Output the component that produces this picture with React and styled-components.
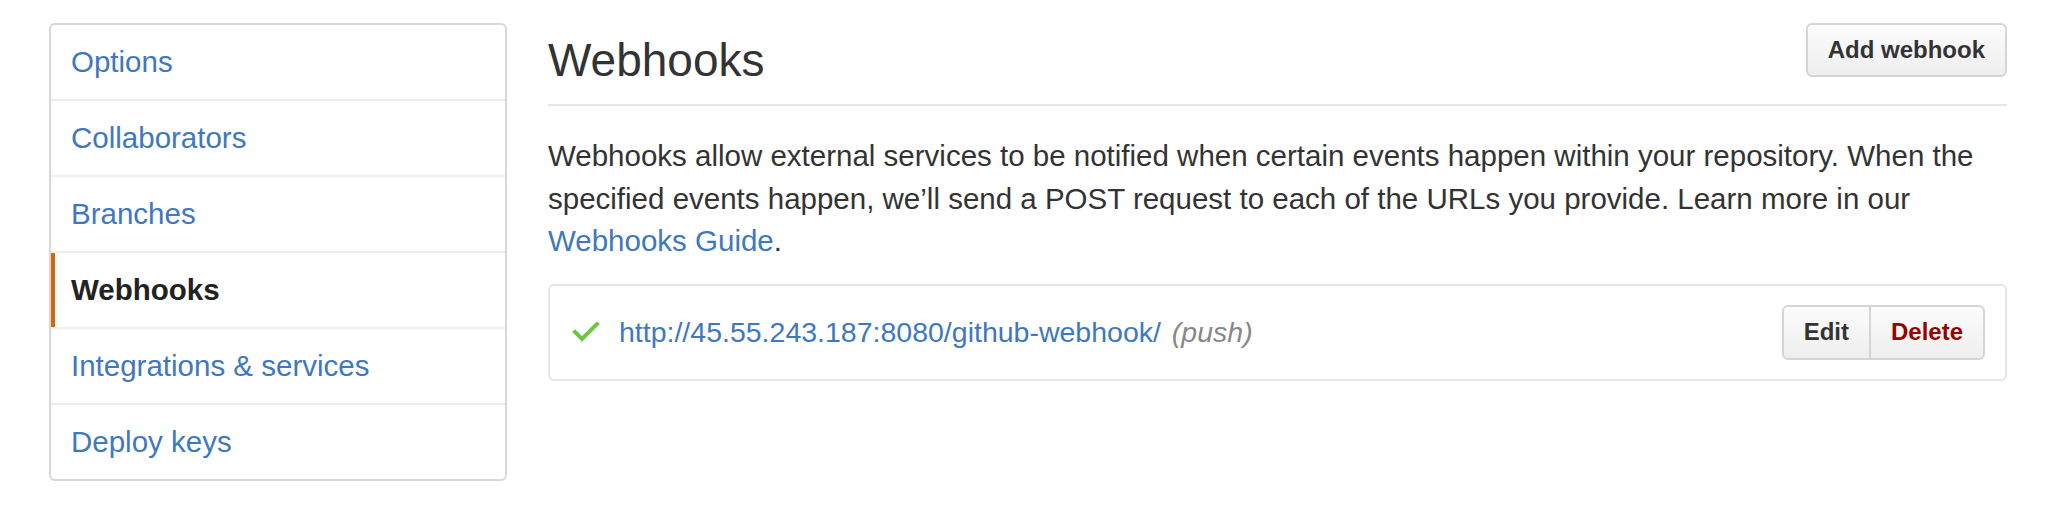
import styled, { createGlobalStyle } from 'styled-components'

const GlobalStyle = createGlobalStyle`
  body {
    margin: 0;
    background: #fff;
    font-family: 'Liberation Sans', Arial, sans-serif;
    color: #333;
  }
`

const Page = styled.div`
  display: flex;
  align-items: flex-start;
  gap: 41px;
  padding: 23px 51px 0 49px;
`

const Menu = styled.nav`
  flex: 0 0 458px;
  box-sizing: border-box;
  border: 2px solid #d8d8d8;
  border-radius: 6px;
  overflow: hidden;
`

const MenuItem = styled.a`
  display: block;
  padding: 17px 20px;
  font-size: 29.5px;
  line-height: 40px;
  color: ${({ selected }) => (selected ? '#222' : '#4078c0')};
  font-weight: ${({ selected }) => (selected ? 700 : 400)};
  text-decoration: none;
  box-shadow: ${({ selected }) => (selected ? 'inset 4px 0 0 #d26911' : 'none')};

  & + & {
    border-top: 2px solid #eee;
  }
`

const Main = styled.main`
  flex: 1;
  min-width: 0;
`

const Subhead = styled.div`
  display: flex;
  align-items: flex-start;
  justify-content: space-between;
  padding-bottom: 7px;
  border-bottom: 2px solid #e5e5e5;
  margin-bottom: 29px;
`

const Title = styled.h2`
  margin: 0;
  font-size: 46px;
  font-weight: 400;
  line-height: 74px;
  color: #333;
`

const Button = styled.button`
  display: inline-flex;
  align-items: center;
  box-sizing: border-box;
  height: ${({ tall }) => (tall ? '55px' : '54px')};
  padding: 0 20px;
  font-family: inherit;
  font-size: 24px;
  font-weight: 700;
  color: ${({ danger }) => (danger ? '#990000' : '#333')};
  background: linear-gradient(#fcfcfc, #eee);
  border: 2px solid #d5d5d5;
  border-radius: 6px;
`

const ButtonGroup = styled.div`
  display: flex;

  & > ${Button} {
    border-radius: 0;
  }
  & > ${Button}:first-child {
    border-radius: 6px 0 0 6px;
  }
  & > ${Button}:last-child {
    border-left: 0;
    border-radius: 0 6px 6px 0;
  }
`

const Intro = styled.p`
  margin: 0 0 21px;
  font-size: 29.5px;
  line-height: 42.5px;
  color: #333;
`

const Link = styled.a`
  color: #4078c0;
  text-decoration: none;
`

const HookList = styled.div`
  border: 2px solid #e5e5e5;
  border-radius: 6px;
`

const HookRow = styled.div`
  display: flex;
  align-items: center;
  padding: 19px 20px 19px 22px;
`

const HookInfo = styled.div`
  flex: 1;
  display: flex;
  align-items: center;
  gap: 19px;
  font-size: 28.5px;
`

const Events = styled.em`
  margin-left: 3px;
  color: #888;
`

const CheckIcon = () => (
  <svg width="28" height="20" viewBox="0 0 28 20" fill="none">
    <polyline
      points="3,10 10,17 25,2"
      stroke="#6cc644"
      strokeWidth="4"
      strokeLinecap="square"
    />
  </svg>
)

const items = [
  'Options',
  'Collaborators',
  'Branches',
  'Webhooks',
  'Integrations & services',
  'Deploy keys',
]

export default function App() {
  return (
    <>
      <GlobalStyle />
      <Page>
        <Menu>
          {items.map((item) => (
            <MenuItem key={item} selected={item === 'Webhooks'}>
              {item}
            </MenuItem>
          ))}
        </Menu>

        <Main>
          <Subhead>
            <Title>Webhooks</Title>
            <Button>Add webhook</Button>
          </Subhead>

          <Intro>
            Webhooks allow external services to be notified when certain events happen within
            your repository. When the specified events happen, we’ll send a POST request to each
            of the URLs you provide. Learn more in our <Link>Webhooks Guide</Link>.
          </Intro>

          <HookList>
            <HookRow>
              <HookInfo>
                <CheckIcon />
                <span>
                  <Link>http://45.55.243.187:8080/github-webhook/</Link>{' '}
                  <Events>(push)</Events>
                </span>
              </HookInfo>
              <ButtonGroup>
                <Button tall>Edit</Button>
                <Button tall danger>
                  Delete
                </Button>
              </ButtonGroup>
            </HookRow>
          </HookList>
        </Main>
      </Page>
    </>
  )
}
